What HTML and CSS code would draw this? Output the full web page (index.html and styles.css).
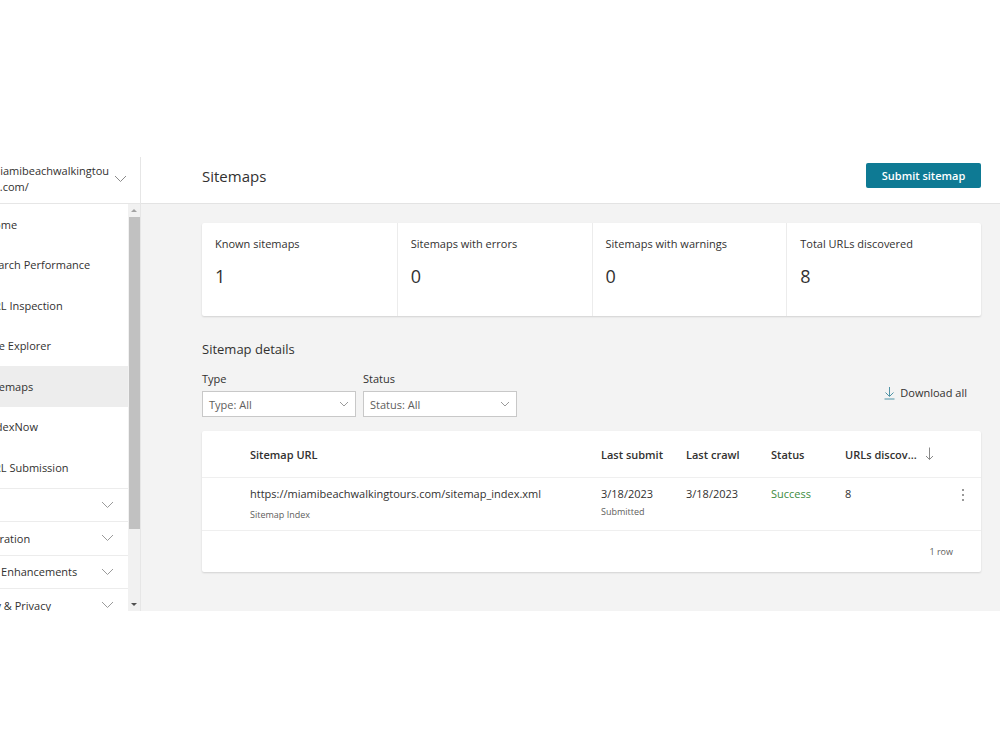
FILE: index.html
```html
<!DOCTYPE html>
<html lang="en">
<head>
  <meta charset="UTF-8">
  <meta name="viewport" content="width=device-width, initial-scale=1.0">
  <title>Sitemaps</title>
  <link rel="stylesheet" href="styles.css">
</head>
<body>
<div class="frame">
  <aside class="sidebar">
    <div class="side-inner">
      <div class="site-pick">
        <span class="site-name">miamibeachwalkingtou<br>rs.com/</span>
        <svg class="chev" width="13" height="8" viewBox="0 0 13 8"><path d="M1 1l5.5 5.5L12 1" fill="none" stroke="#8a8a8a" stroke-width="1"/></svg>
      </div>
      <div class="side-body">
        <nav class="side-list">
          <a class="nav-item">Home</a>
          <a class="nav-item">Search Performance</a>
          <a class="nav-item">URL Inspection</a>
          <a class="nav-item">Site Explorer</a>
          <a class="nav-item active">Sitemaps</a>
          <a class="nav-item">IndexNow</a>
          <a class="nav-item">URL Submission</a>
          <div class="group"><span>SEO</span><svg class="chev" width="13" height="8" viewBox="0 0 13 8"><path d="M1 1l5.5 5.5L12 1" fill="none" stroke="#9a9a9a" stroke-width="1"/></svg></div>
          <div class="group"><span>Configuration</span><svg class="chev" width="13" height="8" viewBox="0 0 13 8"><path d="M1 1l5.5 5.5L12 1" fill="none" stroke="#9a9a9a" stroke-width="1"/></svg></div>
          <div class="group"><span>Tools &amp; Enhancements</span><svg class="chev" width="13" height="8" viewBox="0 0 13 8"><path d="M1 1l5.5 5.5L12 1" fill="none" stroke="#9a9a9a" stroke-width="1"/></svg></div>
          <div class="group"><span>Security &amp; Privacy</span><svg class="chev" width="13" height="8" viewBox="0 0 13 8"><path d="M1 1l5.5 5.5L12 1" fill="none" stroke="#9a9a9a" stroke-width="1"/></svg></div>
        </nav>
        <div class="scrollbar">
          <span class="sb-up"></span>
          <span class="sb-thumb"></span>
          <span class="sb-down"></span>
        </div>
      </div>
    </div>
  </aside>

  <main class="main">
    <header class="page-head">
      <h1>Sitemaps</h1>
      <button class="btn-primary">Submit sitemap</button>
    </header>

    <div class="content">
      <section class="stats">
        <div class="stat"><p class="stat-label">Known sitemaps</p><p class="stat-num">1</p></div>
        <div class="stat"><p class="stat-label">Sitemaps with errors</p><p class="stat-num">0</p></div>
        <div class="stat"><p class="stat-label">Sitemaps with warnings</p><p class="stat-num">0</p></div>
        <div class="stat"><p class="stat-label">Total URLs discovered</p><p class="stat-num">8</p></div>
      </section>

      <h2 class="section-title">Sitemap details</h2>

      <div class="filters">
        <div class="filter">
          <label>Type</label>
          <div class="select">Type: All
            <svg width="10" height="6" viewBox="0 0 10 6"><path d="M1 1l4 4 4-4" fill="none" stroke="#9a9a9a" stroke-width="1"/></svg>
          </div>
        </div>
        <div class="filter">
          <label>Status</label>
          <div class="select">Status: All
            <svg width="10" height="6" viewBox="0 0 10 6"><path d="M1 1l4 4 4-4" fill="none" stroke="#9a9a9a" stroke-width="1"/></svg>
          </div>
        </div>
        <button class="download">
          <svg width="11" height="14" viewBox="0 0 11 14"><path d="M5.5 1v9M1.5 6.5l4 4 4-4M0.5 13h10" fill="none" stroke="#4f93a6" stroke-width="1"/></svg>
          Download all
        </button>
      </div>

      <section class="table-card">
        <div class="row head">
          <span></span>
          <span>Sitemap URL</span>
          <span>Last submit</span>
          <span>Last crawl</span>
          <span>Status</span>
          <span class="sort">URLs discov...
            <svg width="9" height="14" viewBox="0 0 9 14"><path d="M4.5 0.5v12M1 9l3.5 3.5L8 9" fill="none" stroke="#8a8a8a" stroke-width="1"/></svg>
          </span>
          <span></span>
        </div>
        <div class="row data">
          <span></span>
          <span>https://miamibeachwalkingtours.com/sitemap_index.xml<small class="low">Sitemap Index</small></span>
          <span>3/18/2023<small>Submitted</small></span>
          <span>3/18/2023</span>
          <span class="ok">Success</span>
          <span>8</span>
          <span class="more"><i></i><i></i><i></i></span>
        </div>
        <div class="table-foot">1 row</div>
      </section>
    </div>
  </main>
</div>
</body>
</html>
```

FILE: styles.css
```css
* {
    margin: 0;
    padding: 0;
    box-sizing: border-box;
}

body {
    background: #fff;
    font-family: "Open Sans", "Noto Sans", sans-serif;
    font-size: 12px;
    color: #323130;
}

.frame {
    margin-top: 157px;
    height: 454px;
    display: flex;
    overflow: hidden;
}

/* left navigation */
.sidebar {
    width: 141px;
    flex-shrink: 0;
    border-right: 1px solid #e6e6e6;
    overflow: hidden;
    background: #fff;
}

.side-inner {
    margin-left: -60px;
    height: 100%;
    display: flex;
    flex-direction: column;
}

.site-pick {
    height: 47px;
    flex-shrink: 0;
    border-bottom: 1px solid #e6e6e6;
    display: flex;
    align-items: center;
    justify-content: space-between;
    padding: 0 13px 2px 50px;
}

.site-name {
    line-height: 16px;
    font-size: 11px;
    color: #323130;
}

.side-body {
    flex: 1;
    display: flex;
    min-height: 0;
}

.side-list {
    flex: 1;
    display: flex;
    flex-direction: column;
    overflow: hidden;
}

.nav-item {
    height: 40.5px;
    flex-shrink: 0;
    display: flex;
    align-items: center;
    padding-left: 46px;
    font-size: 11px;
    color: #323130;
}

.nav-item.active {
    background: #ededed;
}

.group {
    height: 33.5px;
    flex-shrink: 0;
    border-top: 1px solid #ececec;
    display: flex;
    align-items: center;
    justify-content: space-between;
    padding: 0 14px 0 20px;
    font-size: 11px;
    color: #323130;
}

.scrollbar {
    width: 12px;
    background: #f1f1f1;
    display: flex;
    flex-direction: column;
    align-items: center;
}

.sb-up, .sb-down {
    width: 0;
    height: 0;
    border-left: 3px solid transparent;
    border-right: 3px solid transparent;
    margin: 5px 0;
}

.sb-up {
    border-bottom: 3px solid #a3a3a3;
}

.sb-down {
    border-top: 3px solid #505050;
    margin-top: auto;
}

.sb-thumb {
    width: 11px;
    height: 312px;
    background: #c1c1c1;
}

/* main area */
.main {
    flex: 1;
    background: #f3f3f3;
    display: flex;
    flex-direction: column;
}

.page-head {
    height: 47px;
    flex-shrink: 0;
    background: #fff;
    border-bottom: 1px solid #e3e3e3;
    display: flex;
    align-items: center;
    justify-content: space-between;
    padding: 0 19px 9px 61px;
}

.page-head h1 {
    font-size: 15px;
    font-weight: 400;
    color: #323130;
}

.btn-primary {
    background: #0e7a94;
    color: #fff;
    border: none;
    border-radius: 2px;
    font-family: inherit;
    font-size: 11px;
    font-weight: 600;
    width: 115px;
    height: 25px;
}

.content {
    padding: 19px 19px 0 61px;
}

.stats {
    display: grid;
    grid-template-columns: repeat(4, 1fr);
    background: #fff;
    height: 93px;
    box-shadow: 0 1px 2px rgba(0, 0, 0, 0.14);
    border-radius: 2px;
}

.stat {
    padding: 13px 13px 0;
}

.stat + .stat {
    border-left: 1px solid #ececec;
}

.stat-label {
    font-size: 11px;
    line-height: 16px;
}

.stat-num {
    font-size: 18px;
    line-height: 24px;
    margin-top: 12px;
}

.section-title {
    font-size: 13px;
    font-weight: 400;
    line-height: 20px;
    margin-top: 23px;
}

.filters {
    display: flex;
    gap: 7px;
    margin-top: 12px;
    align-items: center;
}

.filter label {
    display: block;
    font-size: 11px;
    line-height: 16px;
    margin-bottom: 4px;
}

.select {
    width: 154px;
    height: 26px;
    background: #fff;
    border: 1px solid #c8c8c8;
    display: flex;
    align-items: center;
    justify-content: space-between;
    padding: 0 6px 0 6px;
    font-size: 11px;
    color: #605e5c;
}

.download {
    margin-left: auto;
    margin-right: 14px;
    margin-top: -3px;
    background: none;
    border: none;
    font-family: inherit;
    font-size: 11px;
    color: #323130;
    display: flex;
    align-items: center;
    gap: 5px;
}

/* sitemap table */
.table-card {
    margin-top: 14px;
    background: #fff;
    box-shadow: 0 1px 2px rgba(0, 0, 0, 0.14);
    border-radius: 2px;
}

.row {
    display: grid;
    grid-template-columns: 48px 351px 85px 85px 74px 1fr 36px;
    border-bottom: 1px solid #efefef;
}

.row.head {
    height: 47px;
    align-items: center;
    font-weight: 600;
    font-size: 11px;
}

.sort {
    display: flex;
    align-items: center;
    gap: 8px;
}

.row.data {
    height: 53px;
    padding-top: 8px;
    font-size: 11px;
    line-height: 16px;
}

.row.data small {
    display: block;
    font-size: 9px;
    line-height: 13px;
    margin-top: 3px;
    color: #605e5c;
}

.row.data small.low {
    margin-top: 6px;
}

.ok {
    color: #3d8b3d;
}

.more {
    display: flex;
    flex-direction: column;
    align-items: center;
    gap: 3px;
    padding-top: 3px;
}

.more i {
    width: 2px;
    height: 2px;
    background: #777;
    border-radius: 50%;
}

.table-foot {
    height: 41px;
    display: flex;
    align-items: center;
    justify-content: flex-end;
    padding-right: 28px;
    font-size: 9px;
    color: #605e5c;
}
```
